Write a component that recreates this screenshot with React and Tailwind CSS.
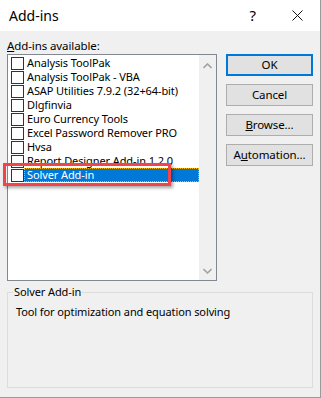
import React from 'react'

const items = [
  'Analysis ToolPak',
  'Analysis ToolPak - VBA',
  'ASAP Utilities 7.9.2 (32+64-bit)',
  'Dlgfinvia',
  'Euro Currency Tools',
  'Excel Password Remover PRO',
  'Hvsa',
  'Report Designer Add-in 1.2.0',
  'Solver Add-in',
]

const Chevron = ({ down }) => (
  <svg width="9" height="6" viewBox="0 0 9 6" className={down ? 'rotate-180' : ''}>
    <path d="M0.5 5 L4.5 1 L8.5 5" fill="none" stroke="#a3a3a3" strokeWidth="1.6" />
  </svg>
)

const Button = ({ children, primary }) => (
  <div
    className={
      'h-[22px] w-[87px] flex items-center justify-center bg-[#e1e1e1] text-black ' +
      (primary ? 'border-2 border-[#0078d7]' : 'border border-[#adadad]')
    }>
    {children}
  </div>
)

const App = () => {
  return (
    <div
      className="w-[321px] h-[398px] flex flex-col bg-[#f0f0f0] border-r border-b border-[#9a9a9a] text-[11px] tracking-[-0.1px] text-black overflow-hidden"
      style={{ fontFamily: '"Noto Sans", "Liberation Sans", sans-serif' }}>
      {/* title bar */}
      <div className="h-[31px] bg-white flex items-center shrink-0 tracking-normal">
        <span className="ml-[9px] text-[14px] flex-1">Add-ins</span>
        <span className="text-[15px] mr-[36px]">?</span>
        <svg width="11" height="11" viewBox="0 0 11 11" className="mr-[17px]">
          <path d="M0.5 0.5 L10.5 10.5 M10.5 0.5 L0.5 10.5" stroke="#111" strokeWidth="1" />
        </svg>
      </div>

      <div className="relative flex-1 px-[7px] pt-[6px]">
        <div className="h-[17px] leading-[17px] text-[11.5px]">
          <span className="underline">A</span>dd-ins available:
        </div>

        <div className="flex">
          <div className="w-[210px] h-[227px] border border-[#828790] bg-white flex">
            <div className="flex-1 pt-[1px]">
              {items.map((it, i) => {
                const sel = i === items.length - 1
                return (
                  <div key={it} className="h-[14px] flex items-center pl-[3px]">
                    <div className="w-[13px] h-[13px] border border-[#333] bg-white shrink-0" />
                    <div
                      className={
                        'flex-1 h-[14px] leading-[12px] pl-[2px] whitespace-nowrap ' +
                        (sel
                          ? 'bg-[#0078d7] text-white border border-dotted border-[#f7b500]'
                          : 'border border-transparent')
                      }>
                      {it}
                    </div>
                  </div>
                )
              })}
            </div>
            <div className="w-[17px] bg-[#f0f0f0] flex flex-col items-center justify-between pt-[8px] pb-[6px]">
              <Chevron />
              <Chevron down />
            </div>
          </div>

          <div className="ml-[9px] flex flex-col gap-[8px] text-[11.5px]">
            <Button primary>OK</Button>
            <Button>Cancel</Button>
            <Button>
              <span>
                <span className="underline">B</span>rowse...
              </span>
            </Button>
            <Button>
              <span>
                A<span className="underline">u</span>tomation...
              </span>
            </Button>
          </div>
        </div>

        {/* group box */}
        <div className="relative mt-[11px] w-[306px] h-[96px] border border-[#dcdcdc] pt-[11px] pl-[8px]">
          <span className="absolute -top-[9px] left-[5px] px-[1px] bg-[#f0f0f0]">Solver Add-in</span>
          <div>Tool for optimization and equation solving</div>
        </div>

        {/* highlight */}
        <div className="absolute left-[3px] top-[132px] w-[168px] h-[23px] border-[3px] border-[#f2444b] shadow-[2px_2px_3px_rgba(0,0,0,0.35)]" />
      </div>
    </div>
  )
}

export default App
